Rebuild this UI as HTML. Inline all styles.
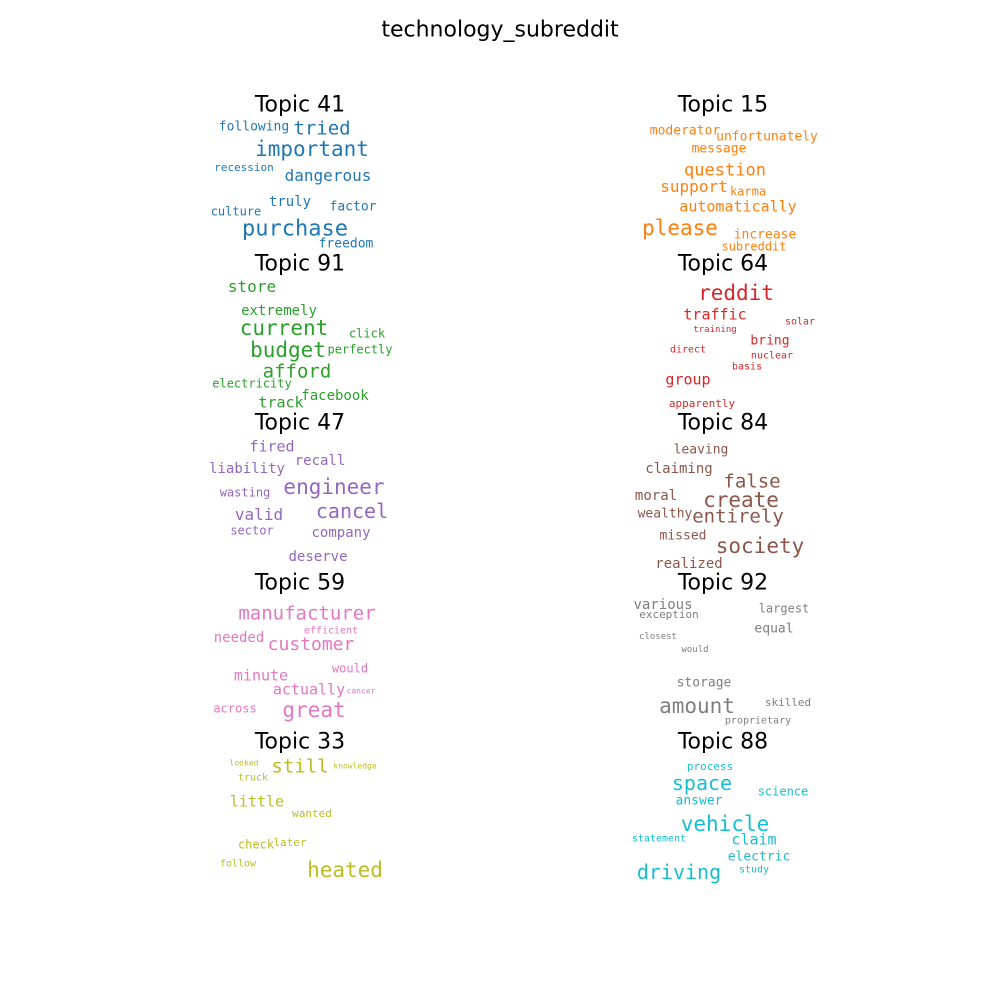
<!DOCTYPE html>
<html><head><meta charset="utf-8"><style>
body{margin:0;width:1000px;height:1000px;background:#fff;position:relative;overflow:hidden}
span{position:absolute;transform:translate(-50%,-44%);white-space:nowrap;font-family:"DejaVu Sans Mono","Liberation Mono",monospace;line-height:1}
.t{font-family:"DejaVu Sans","Liberation Sans",sans-serif;color:#000;font-size:22px}
.b{color:#1f77b4}.o{color:#ff7f0e}.g{color:#2ca02c}.r{color:#d62728}.p{color:#9467bd}.n{color:#8c564b}.k{color:#e377c2}.y{color:#7f7f7f}.l{color:#bcbd22}.c{color:#17becf}
</style></head><body>
<span class="t" style="left:500px;top:29px;font-size:22px">technology_subreddit</span>

<span class="t" style="left:300px;top:104px">Topic 41</span>
<span class="b" style="left:254px;top:126px;font-size:13px">following</span>
<span class="b" style="left:322px;top:128px;font-size:19px">tried</span>
<span class="b" style="left:312px;top:148px;font-size:21px">important</span>
<span class="b" style="left:244px;top:167px;font-size:11px">recession</span>
<span class="b" style="left:328px;top:175px;font-size:16px">dangerous</span>
<span class="b" style="left:290px;top:201px;font-size:14px">truly</span>
<span class="b" style="left:353px;top:206px;font-size:13px">factor</span>
<span class="b" style="left:236px;top:211px;font-size:12px">culture</span>
<span class="b" style="left:295px;top:228px;font-size:22px">purchase</span>
<span class="b" style="left:346px;top:243px;font-size:13px">freedom</span>

<span class="t" style="left:300px;top:263px">Topic 91</span>
<span class="g" style="left:252px;top:286px;font-size:16px">store</span>
<span class="g" style="left:279px;top:310px;font-size:14px">extremely</span>
<span class="g" style="left:284px;top:327px;font-size:21px">current</span>
<span class="g" style="left:367px;top:333px;font-size:12px">click</span>
<span class="g" style="left:288px;top:349px;font-size:21px">budget</span>
<span class="g" style="left:360px;top:349px;font-size:12px">perfectly</span>
<span class="g" style="left:297px;top:371px;font-size:19px">afford</span>
<span class="g" style="left:252px;top:383px;font-size:12px">electricity</span>
<span class="g" style="left:335px;top:395px;font-size:14px">facebook</span>
<span class="g" style="left:281px;top:402px;font-size:15px">track</span>

<span class="t" style="left:300px;top:422px">Topic 47</span>
<span class="p" style="left:272px;top:446px;font-size:15px">fired</span>
<span class="p" style="left:320px;top:460px;font-size:14px">recall</span>
<span class="p" style="left:247px;top:468px;font-size:14px">liability</span>
<span class="p" style="left:334px;top:486px;font-size:21px">engineer</span>
<span class="p" style="left:245px;top:492px;font-size:12px">wasting</span>
<span class="p" style="left:352px;top:510px;font-size:20px">cancel</span>
<span class="p" style="left:259px;top:514px;font-size:16px">valid</span>
<span class="p" style="left:252px;top:530px;font-size:12px">sector</span>
<span class="p" style="left:341px;top:532px;font-size:14px">company</span>
<span class="p" style="left:318px;top:556px;font-size:14px">deserve</span>

<span class="t" style="left:300px;top:582px">Topic 59</span>
<span class="k" style="left:307px;top:613px;font-size:19px">manufacturer</span>
<span class="k" style="left:331px;top:631px;font-size:10px">efficient</span>
<span class="k" style="left:239px;top:637px;font-size:14px">needed</span>
<span class="k" style="left:311px;top:644px;font-size:18px">customer</span>
<span class="k" style="left:350px;top:668px;font-size:12px">would</span>
<span class="k" style="left:261px;top:675px;font-size:15px">minute</span>
<span class="k" style="left:309px;top:689px;font-size:15px">actually</span>
<span class="k" style="left:361px;top:691px;font-size:8px">cancer</span>
<span class="k" style="left:235px;top:708px;font-size:12px">across</span>
<span class="k" style="left:314px;top:709px;font-size:21px">great</span>

<span class="t" style="left:300px;top:741px">Topic 33</span>
<span class="l" style="left:244px;top:763px;font-size:8px">looked</span>
<span class="l" style="left:300px;top:766px;font-size:19px">still</span>
<span class="l" style="left:355px;top:766px;font-size:8px">knowledge</span>
<span class="l" style="left:253px;top:778px;font-size:10px">truck</span>
<span class="l" style="left:257px;top:801px;font-size:15px">little</span>
<span class="l" style="left:312px;top:813px;font-size:11px">wanted</span>
<span class="l" style="left:256px;top:844px;font-size:12px">check</span>
<span class="l" style="left:290px;top:842px;font-size:11px">later</span>
<span class="l" style="left:238px;top:864px;font-size:10px">follow</span>
<span class="l" style="left:345px;top:869px;font-size:21px">heated</span>

<span class="t" style="left:723px;top:104px">Topic 15</span>
<span class="o" style="left:685px;top:130px;font-size:13px">moderator</span>
<span class="o" style="left:767px;top:136px;font-size:13px">unfortunately</span>
<span class="o" style="left:719px;top:148px;font-size:13px">message</span>
<span class="o" style="left:725px;top:170px;font-size:17px">question</span>
<span class="o" style="left:694px;top:186px;font-size:16px">support</span>
<span class="o" style="left:748px;top:191px;font-size:12px">karma</span>
<span class="o" style="left:738px;top:206px;font-size:15px">automatically</span>
<span class="o" style="left:680px;top:227px;font-size:21px">please</span>
<span class="o" style="left:765px;top:234px;font-size:13px">increase</span>
<span class="o" style="left:754px;top:246px;font-size:12px">subreddit</span>

<span class="t" style="left:723px;top:263px">Topic 64</span>
<span class="r" style="left:736px;top:292px;font-size:21px">reddit</span>
<span class="r" style="left:715px;top:314px;font-size:15px">traffic</span>
<span class="r" style="left:715px;top:330px;font-size:9px">training</span>
<span class="r" style="left:800px;top:322px;font-size:10px">solar</span>
<span class="r" style="left:770px;top:340px;font-size:13px">bring</span>
<span class="r" style="left:688px;top:350px;font-size:10px">direct</span>
<span class="r" style="left:772px;top:356px;font-size:10px">nuclear</span>
<span class="r" style="left:747px;top:367px;font-size:10px">basis</span>
<span class="r" style="left:688px;top:379px;font-size:15px">group</span>
<span class="r" style="left:702px;top:403px;font-size:11px">apparently</span>

<span class="t" style="left:723px;top:422px">Topic 84</span>
<span class="n" style="left:701px;top:449px;font-size:13px">leaving</span>
<span class="n" style="left:679px;top:468px;font-size:14px">claiming</span>
<span class="n" style="left:752px;top:481px;font-size:19px">false</span>
<span class="n" style="left:656px;top:495px;font-size:14px">moral</span>
<span class="n" style="left:741px;top:499px;font-size:21px">create</span>
<span class="n" style="left:665px;top:513px;font-size:13px">wealthy</span>
<span class="n" style="left:738px;top:516px;font-size:19px">entirely</span>
<span class="n" style="left:683px;top:535px;font-size:13px">missed</span>
<span class="n" style="left:760px;top:545px;font-size:21px">society</span>
<span class="n" style="left:689px;top:563px;font-size:14px">realized</span>

<span class="t" style="left:723px;top:582px">Topic 92</span>
<span class="y" style="left:663px;top:604px;font-size:14px">various</span>
<span class="y" style="left:669px;top:614px;font-size:11px">exception</span>
<span class="y" style="left:784px;top:608px;font-size:12px">largest</span>
<span class="y" style="left:774px;top:628px;font-size:13px">equal</span>
<span class="y" style="left:658px;top:637px;font-size:9px">closest</span>
<span class="y" style="left:695px;top:650px;font-size:9px">would</span>
<span class="y" style="left:704px;top:682px;font-size:13px">storage</span>
<span class="y" style="left:697px;top:705px;font-size:21px">amount</span>
<span class="y" style="left:788px;top:702px;font-size:11px">skilled</span>
<span class="y" style="left:758px;top:721px;font-size:10px">proprietary</span>

<span class="t" style="left:723px;top:741px">Topic 88</span>
<span class="c" style="left:710px;top:766px;font-size:11px">process</span>
<span class="c" style="left:702px;top:782px;font-size:20px">space</span>
<span class="c" style="left:783px;top:791px;font-size:12px">science</span>
<span class="c" style="left:699px;top:800px;font-size:13px">answer</span>
<span class="c" style="left:725px;top:823px;font-size:21px">vehicle</span>
<span class="c" style="left:754px;top:839px;font-size:15px">claim</span>
<span class="c" style="left:659px;top:839px;font-size:10px">statement</span>
<span class="c" style="left:759px;top:856px;font-size:13px">electric</span>
<span class="c" style="left:679px;top:871px;font-size:20px">driving</span>
<span class="c" style="left:754px;top:870px;font-size:10px">study</span>
</body></html>
